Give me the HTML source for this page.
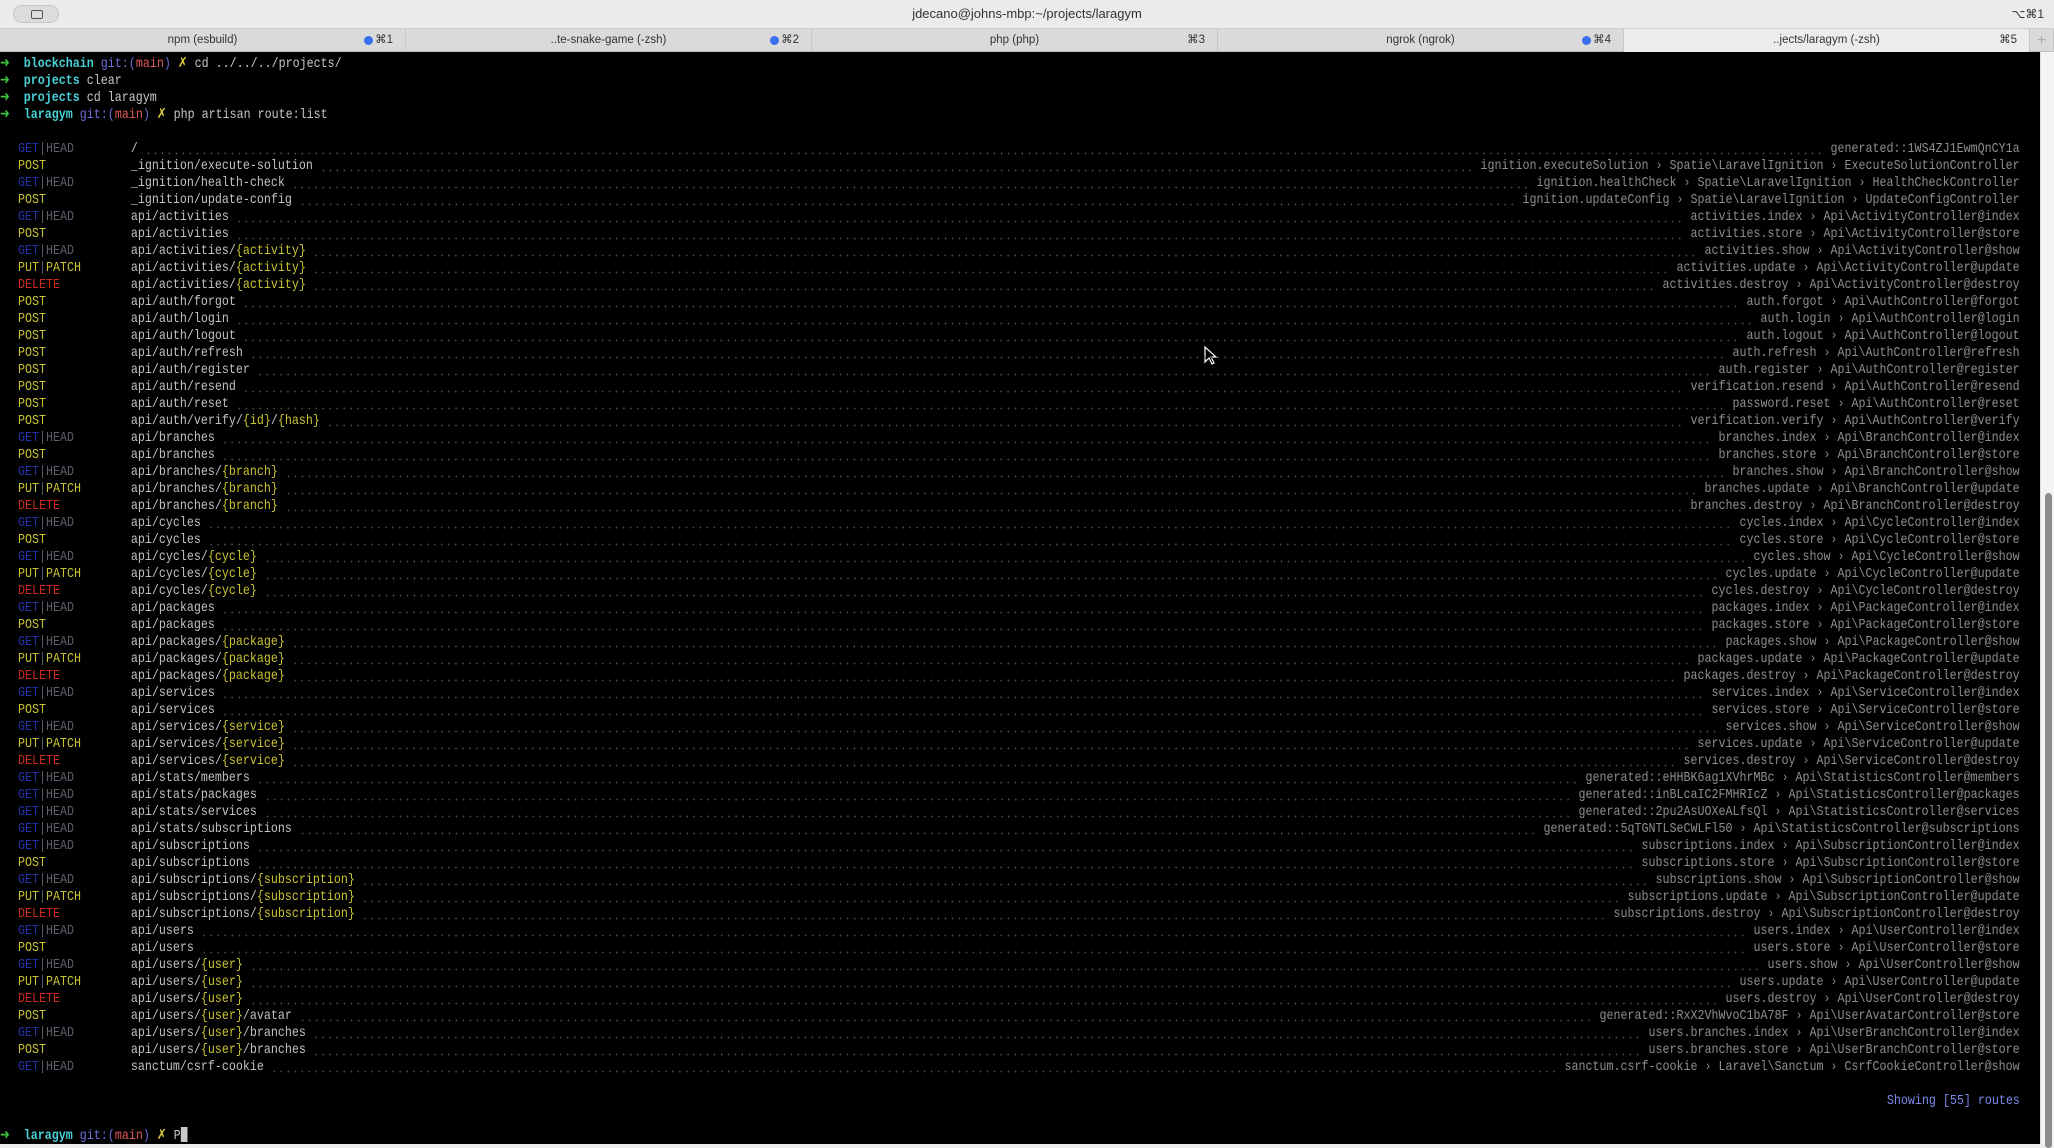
<!DOCTYPE html>
<html><head><meta charset="utf-8"><style>
*{margin:0;padding:0;box-sizing:border-box}
body{width:2054px;height:1144px;overflow:hidden;background:#ececec;font-family:"Liberation Sans",sans-serif;position:relative}
.title{position:absolute;left:0;top:0;width:2054px;height:28px;background:#ebebeb;text-align:center;font-size:13px;line-height:28px;color:#333}
.btn{position:absolute;left:13px;top:5px;width:46px;height:18px;border-radius:9px;background:#dcdcdc;border:1px solid #c8c8c8}
.btn i{position:absolute;left:17px;top:4px;width:12px;height:9px;border:1.5px solid #555;border-radius:2px}
.kb{position:absolute;right:10px;top:0;font-size:12px;color:#333}
.tabs{position:absolute;left:0;top:28px;width:2054px;height:24px;background:#dadada;border-top:1px solid #cfcfcf;border-bottom:1px solid #bdbdbd}
.tab{position:absolute;top:0;height:23px;border-right:1px solid #c6c6c6;font-size:11.5px;line-height:23px;color:#333;text-align:center}
.tab .k{position:absolute;right:12px;top:0;color:#333}
.tab .dot{position:absolute;top:7px;width:9px;height:9px;border-radius:50%;background:#3a6ff0}
.tab.act{background:#ececec}
.term{position:absolute;left:0;top:52px;width:2040px;height:1092px;background:#000}
.sb{position:absolute;left:2040px;top:52px;width:14px;height:1092px;background:#f4f4f4;border-left:1px solid #ddd}
.sb i{position:absolute;left:4px;top:441px;width:7px;height:655px;border-radius:4px;background:#8c8c8c}
.txt{position:absolute;left:0;top:56px;width:2448px;transform:scaleX(0.8333);transform-origin:0 0;font-family:"Liberation Mono",monospace;font-size:14px;color:#c8c8c8}
.l{height:17px;line-height:17px;white-space:pre;padding-left:0}
.r{display:flex;height:17px;line-height:17px;white-space:pre;margin-left:21.6px;width:2402px}
.m{width:135.4px;flex:none}
.p{flex:none;color:#c2c2c2}
.d{flex:1;margin:0 8.4px;background-image:radial-gradient(circle,#4a4a4a 0.8px,transparent 1.2px);background-size:8.4px 17px;background-position:0 4px}
.t{flex:none;color:#8e8e94}
.g{color:#2432a8}.h{color:#5b5f6c}.y{color:#c8c330}.x{color:#cc2a1e}.v{color:#c9c431}
.ar{color:#3ec43e}.dir{color:#49cfd6;font-weight:bold}.gt{color:#6b70d8}.mn{color:#e05858}.xx{color:#e0d040}
.sh{color:#7d89ea;text-align:right;width:2424px}
.cur{display:inline-block;width:8px;height:15px;background:#c8c8c8;vertical-align:-3px}
</style></head><body>
<div class="title"><div class="btn"><i></i></div>jdecano@johns-mbp:~/projects/laragym<span class="kb">⌥⌘1</span></div>
<div class="tabs">
<div class="tab" style="left:0;width:406px">npm (esbuild)<span class="dot" style="left:364px"></span><span class="k">⌘1</span></div>
<div class="tab" style="left:406px;width:406px">..te-snake-game (-zsh)<span class="dot" style="left:364px"></span><span class="k">⌘2</span></div>
<div class="tab" style="left:812px;width:406px">php (php)<span class="k">⌘3</span></div>
<div class="tab" style="left:1218px;width:406px">ngrok (ngrok)<span class="dot" style="left:364px"></span><span class="k">⌘4</span></div>
<div class="tab act" style="left:1624px;width:406px">..jects/laragym (-zsh)<span class="k">⌘5</span></div>
<div class="tab" style="left:2030px;width:24px;color:#aaa;font-size:16px">+</div>
</div>
<div class="term"></div>
<div class="sb"><i></i></div>
<svg style="position:absolute;left:1204px;top:346px" width="14" height="20" viewBox="0 0 14 20"><path d="M1 1 L1 16 L5 12 L8 18 L10 17 L7 11 L12 11 Z" fill="#000" stroke="#fff" stroke-width="1.2"/></svg>
<div class="txt">
<div class="l"><span class="ar">➜</span>  <span class="dir">blockchain</span> <span class="gt">git:(</span><span class="mn">main</span><span class="gt">)</span> <span class="xx">✗</span> cd ../../../projects/</div>
<div class="l"><span class="ar">➜</span>  <span class="dir">projects</span> clear</div>
<div class="l"><span class="ar">➜</span>  <span class="dir">projects</span> cd laragym</div>
<div class="l"><span class="ar">➜</span>  <span class="dir">laragym</span> <span class="gt">git:(</span><span class="mn">main</span><span class="gt">)</span> <span class="xx">✗</span> php artisan route:list</div>
<div class="l"> </div>
<div class="r"><span class="m"><span class="g">GET</span><span class="h">|HEAD</span></span><span class="p">/</span><span class="d"></span><span class="t">generated::1WS4ZJ1EwmQnCY1a</span></div>
<div class="r"><span class="m y">POST</span><span class="p">_ignition/execute-solution</span><span class="d"></span><span class="t">ignition.executeSolution › Spatie\LaravelIgnition › ExecuteSolutionController</span></div>
<div class="r"><span class="m"><span class="g">GET</span><span class="h">|HEAD</span></span><span class="p">_ignition/health-check</span><span class="d"></span><span class="t">ignition.healthCheck › Spatie\LaravelIgnition › HealthCheckController</span></div>
<div class="r"><span class="m y">POST</span><span class="p">_ignition/update-config</span><span class="d"></span><span class="t">ignition.updateConfig › Spatie\LaravelIgnition › UpdateConfigController</span></div>
<div class="r"><span class="m"><span class="g">GET</span><span class="h">|HEAD</span></span><span class="p">api/activities</span><span class="d"></span><span class="t">activities.index › Api\ActivityController@index</span></div>
<div class="r"><span class="m y">POST</span><span class="p">api/activities</span><span class="d"></span><span class="t">activities.store › Api\ActivityController@store</span></div>
<div class="r"><span class="m"><span class="g">GET</span><span class="h">|HEAD</span></span><span class="p">api/activities/<span class="v">{activity}</span></span><span class="d"></span><span class="t">activities.show › Api\ActivityController@show</span></div>
<div class="r"><span class="m"><span class="y">PUT</span><span class="h">|</span><span class="y">PATCH</span></span><span class="p">api/activities/<span class="v">{activity}</span></span><span class="d"></span><span class="t">activities.update › Api\ActivityController@update</span></div>
<div class="r"><span class="m x">DELETE</span><span class="p">api/activities/<span class="v">{activity}</span></span><span class="d"></span><span class="t">activities.destroy › Api\ActivityController@destroy</span></div>
<div class="r"><span class="m y">POST</span><span class="p">api/auth/forgot</span><span class="d"></span><span class="t">auth.forgot › Api\AuthController@forgot</span></div>
<div class="r"><span class="m y">POST</span><span class="p">api/auth/login</span><span class="d"></span><span class="t">auth.login › Api\AuthController@login</span></div>
<div class="r"><span class="m y">POST</span><span class="p">api/auth/logout</span><span class="d"></span><span class="t">auth.logout › Api\AuthController@logout</span></div>
<div class="r"><span class="m y">POST</span><span class="p">api/auth/refresh</span><span class="d"></span><span class="t">auth.refresh › Api\AuthController@refresh</span></div>
<div class="r"><span class="m y">POST</span><span class="p">api/auth/register</span><span class="d"></span><span class="t">auth.register › Api\AuthController@register</span></div>
<div class="r"><span class="m y">POST</span><span class="p">api/auth/resend</span><span class="d"></span><span class="t">verification.resend › Api\AuthController@resend</span></div>
<div class="r"><span class="m y">POST</span><span class="p">api/auth/reset</span><span class="d"></span><span class="t">password.reset › Api\AuthController@reset</span></div>
<div class="r"><span class="m y">POST</span><span class="p">api/auth/verify/<span class="v">{id}</span>/<span class="v">{hash}</span></span><span class="d"></span><span class="t">verification.verify › Api\AuthController@verify</span></div>
<div class="r"><span class="m"><span class="g">GET</span><span class="h">|HEAD</span></span><span class="p">api/branches</span><span class="d"></span><span class="t">branches.index › Api\BranchController@index</span></div>
<div class="r"><span class="m y">POST</span><span class="p">api/branches</span><span class="d"></span><span class="t">branches.store › Api\BranchController@store</span></div>
<div class="r"><span class="m"><span class="g">GET</span><span class="h">|HEAD</span></span><span class="p">api/branches/<span class="v">{branch}</span></span><span class="d"></span><span class="t">branches.show › Api\BranchController@show</span></div>
<div class="r"><span class="m"><span class="y">PUT</span><span class="h">|</span><span class="y">PATCH</span></span><span class="p">api/branches/<span class="v">{branch}</span></span><span class="d"></span><span class="t">branches.update › Api\BranchController@update</span></div>
<div class="r"><span class="m x">DELETE</span><span class="p">api/branches/<span class="v">{branch}</span></span><span class="d"></span><span class="t">branches.destroy › Api\BranchController@destroy</span></div>
<div class="r"><span class="m"><span class="g">GET</span><span class="h">|HEAD</span></span><span class="p">api/cycles</span><span class="d"></span><span class="t">cycles.index › Api\CycleController@index</span></div>
<div class="r"><span class="m y">POST</span><span class="p">api/cycles</span><span class="d"></span><span class="t">cycles.store › Api\CycleController@store</span></div>
<div class="r"><span class="m"><span class="g">GET</span><span class="h">|HEAD</span></span><span class="p">api/cycles/<span class="v">{cycle}</span></span><span class="d"></span><span class="t">cycles.show › Api\CycleController@show</span></div>
<div class="r"><span class="m"><span class="y">PUT</span><span class="h">|</span><span class="y">PATCH</span></span><span class="p">api/cycles/<span class="v">{cycle}</span></span><span class="d"></span><span class="t">cycles.update › Api\CycleController@update</span></div>
<div class="r"><span class="m x">DELETE</span><span class="p">api/cycles/<span class="v">{cycle}</span></span><span class="d"></span><span class="t">cycles.destroy › Api\CycleController@destroy</span></div>
<div class="r"><span class="m"><span class="g">GET</span><span class="h">|HEAD</span></span><span class="p">api/packages</span><span class="d"></span><span class="t">packages.index › Api\PackageController@index</span></div>
<div class="r"><span class="m y">POST</span><span class="p">api/packages</span><span class="d"></span><span class="t">packages.store › Api\PackageController@store</span></div>
<div class="r"><span class="m"><span class="g">GET</span><span class="h">|HEAD</span></span><span class="p">api/packages/<span class="v">{package}</span></span><span class="d"></span><span class="t">packages.show › Api\PackageController@show</span></div>
<div class="r"><span class="m"><span class="y">PUT</span><span class="h">|</span><span class="y">PATCH</span></span><span class="p">api/packages/<span class="v">{package}</span></span><span class="d"></span><span class="t">packages.update › Api\PackageController@update</span></div>
<div class="r"><span class="m x">DELETE</span><span class="p">api/packages/<span class="v">{package}</span></span><span class="d"></span><span class="t">packages.destroy › Api\PackageController@destroy</span></div>
<div class="r"><span class="m"><span class="g">GET</span><span class="h">|HEAD</span></span><span class="p">api/services</span><span class="d"></span><span class="t">services.index › Api\ServiceController@index</span></div>
<div class="r"><span class="m y">POST</span><span class="p">api/services</span><span class="d"></span><span class="t">services.store › Api\ServiceController@store</span></div>
<div class="r"><span class="m"><span class="g">GET</span><span class="h">|HEAD</span></span><span class="p">api/services/<span class="v">{service}</span></span><span class="d"></span><span class="t">services.show › Api\ServiceController@show</span></div>
<div class="r"><span class="m"><span class="y">PUT</span><span class="h">|</span><span class="y">PATCH</span></span><span class="p">api/services/<span class="v">{service}</span></span><span class="d"></span><span class="t">services.update › Api\ServiceController@update</span></div>
<div class="r"><span class="m x">DELETE</span><span class="p">api/services/<span class="v">{service}</span></span><span class="d"></span><span class="t">services.destroy › Api\ServiceController@destroy</span></div>
<div class="r"><span class="m"><span class="g">GET</span><span class="h">|HEAD</span></span><span class="p">api/stats/members</span><span class="d"></span><span class="t">generated::eHHBK6ag1XVhrMBc › Api\StatisticsController@members</span></div>
<div class="r"><span class="m"><span class="g">GET</span><span class="h">|HEAD</span></span><span class="p">api/stats/packages</span><span class="d"></span><span class="t">generated::inBLcaIC2FMHRIcZ › Api\StatisticsController@packages</span></div>
<div class="r"><span class="m"><span class="g">GET</span><span class="h">|HEAD</span></span><span class="p">api/stats/services</span><span class="d"></span><span class="t">generated::2pu2AsUOXeALfsQl › Api\StatisticsController@services</span></div>
<div class="r"><span class="m"><span class="g">GET</span><span class="h">|HEAD</span></span><span class="p">api/stats/subscriptions</span><span class="d"></span><span class="t">generated::5qTGNTLSeCWLFl50 › Api\StatisticsController@subscriptions</span></div>
<div class="r"><span class="m"><span class="g">GET</span><span class="h">|HEAD</span></span><span class="p">api/subscriptions</span><span class="d"></span><span class="t">subscriptions.index › Api\SubscriptionController@index</span></div>
<div class="r"><span class="m y">POST</span><span class="p">api/subscriptions</span><span class="d"></span><span class="t">subscriptions.store › Api\SubscriptionController@store</span></div>
<div class="r"><span class="m"><span class="g">GET</span><span class="h">|HEAD</span></span><span class="p">api/subscriptions/<span class="v">{subscription}</span></span><span class="d"></span><span class="t">subscriptions.show › Api\SubscriptionController@show</span></div>
<div class="r"><span class="m"><span class="y">PUT</span><span class="h">|</span><span class="y">PATCH</span></span><span class="p">api/subscriptions/<span class="v">{subscription}</span></span><span class="d"></span><span class="t">subscriptions.update › Api\SubscriptionController@update</span></div>
<div class="r"><span class="m x">DELETE</span><span class="p">api/subscriptions/<span class="v">{subscription}</span></span><span class="d"></span><span class="t">subscriptions.destroy › Api\SubscriptionController@destroy</span></div>
<div class="r"><span class="m"><span class="g">GET</span><span class="h">|HEAD</span></span><span class="p">api/users</span><span class="d"></span><span class="t">users.index › Api\UserController@index</span></div>
<div class="r"><span class="m y">POST</span><span class="p">api/users</span><span class="d"></span><span class="t">users.store › Api\UserController@store</span></div>
<div class="r"><span class="m"><span class="g">GET</span><span class="h">|HEAD</span></span><span class="p">api/users/<span class="v">{user}</span></span><span class="d"></span><span class="t">users.show › Api\UserController@show</span></div>
<div class="r"><span class="m"><span class="y">PUT</span><span class="h">|</span><span class="y">PATCH</span></span><span class="p">api/users/<span class="v">{user}</span></span><span class="d"></span><span class="t">users.update › Api\UserController@update</span></div>
<div class="r"><span class="m x">DELETE</span><span class="p">api/users/<span class="v">{user}</span></span><span class="d"></span><span class="t">users.destroy › Api\UserController@destroy</span></div>
<div class="r"><span class="m y">POST</span><span class="p">api/users/<span class="v">{user}</span>/avatar</span><span class="d"></span><span class="t">generated::RxX2VhWvoC1bA78F › Api\UserAvatarController@store</span></div>
<div class="r"><span class="m"><span class="g">GET</span><span class="h">|HEAD</span></span><span class="p">api/users/<span class="v">{user}</span>/branches</span><span class="d"></span><span class="t">users.branches.index › Api\UserBranchController@index</span></div>
<div class="r"><span class="m y">POST</span><span class="p">api/users/<span class="v">{user}</span>/branches</span><span class="d"></span><span class="t">users.branches.store › Api\UserBranchController@store</span></div>
<div class="r"><span class="m"><span class="g">GET</span><span class="h">|HEAD</span></span><span class="p">sanctum/csrf-cookie</span><span class="d"></span><span class="t">sanctum.csrf-cookie › Laravel\Sanctum › CsrfCookieController@show</span></div>
<div class="l"> </div>
<div class="l sh">Showing [55] routes</div>
<div class="l"> </div>
<div class="l"><span class="ar">➜</span>  <span class="dir">laragym</span> <span class="gt">git:(</span><span class="mn">main</span><span class="gt">)</span> <span class="xx">✗</span> P<span class="cur"></span></div>
</div>
</body></html>
